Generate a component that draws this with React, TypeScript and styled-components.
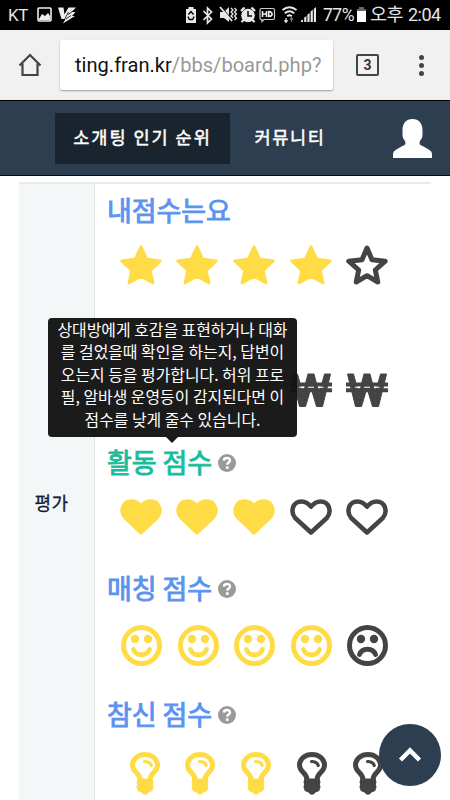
import React from 'react';
import styled, { createGlobalStyle } from 'styled-components';

const KR = '"Noto Sans CJK KR", sans-serif';

const GlobalStyle = createGlobalStyle`
  * { box-sizing: border-box; }
  html, body { margin: 0; padding: 0; }
  body { background: #fff; overflow: hidden; font-family: ${KR}; }
  svg { display: block; overflow: visible; flex: none; }
`;

const Screen = styled.div`
  position: relative;
  width: 450px;
  height: 800px;
  overflow: hidden;
  display: flex;
  flex-direction: column;
`;

const StatusBar = styled.header`
  height: 30px;
  flex: none;
  background: #000;
  color: #e6e6e6;
  display: flex;
  align-items: center;
  justify-content: space-between;
  padding: 0 9px 0 8px;
  font-family: Roboto, ${KR};
  font-size: 18px;
  line-height: 30px;
  white-space: nowrap;
`;

const StatusGroup = styled.div<{ $gap: number }>`
  display: flex;
  align-items: center;
  gap: ${(p) => p.$gap}px;
`;

const StatusText = styled.span<{ $w: number; $size?: number }>`
  width: ${(p) => p.$w}px;
  font-size: ${(p) => p.$size ?? 18}px;
  letter-spacing: -0.5px;
`;

const Toolbar = styled.div`
  height: 70px;
  flex: none;
  background: #f1f1f1;
  display: flex;
  align-items: center;
  padding-left: 18px;
`;

const AddressBar = styled.div`
  width: 273px;
  height: 50px;
  margin-left: 18px;
  padding-left: 15px;
  border-radius: 2px;
  background: #fff;
  box-shadow: 0 1px 2px rgba(0, 0, 0, 0.35);
  font: 20.1px/50px Roboto, sans-serif;
  color: #999;
  white-space: nowrap;
`;

const Host = styled.span`
  color: #111;
`;

const TabCount = styled.div`
  width: 23px;
  height: 22px;
  margin-left: 23px;
  border: 2px solid #444;
  border-radius: 2px;
  font: bold 14px/18px Roboto, sans-serif;
  color: #333;
  text-align: center;
`;

const MenuDots = styled.div`
  margin-left: 40px;
  display: flex;
  flex-direction: column;
  gap: 3px;
`;

const Dot = styled.i`
  width: 5px;
  height: 5px;
  border-radius: 50%;
  background: #444;
`;

const SiteNav = styled.nav`
  height: 76px;
  flex: none;
  background: #2c3e50;
  border-top: 1px solid #000;
  border-bottom: 1px solid #08083a;
  display: flex;
  align-items: center;
  padding-left: 55px;
`;

const NavItem = styled.a<{ $active?: boolean; $w: number }>`
  width: ${(p) => p.$w}px;
  height: 51px;
  background: ${(p) => (p.$active ? '#1a242f' : 'transparent')};
  color: #fff;
  font-size: 17.5px;
  -webkit-text-stroke: 0.5px #fff;
  letter-spacing: ${(p) => (p.$active ? 2 : 1.6)}px;
  line-height: 48px;
  text-align: center;
  white-space: nowrap;
`;

const UserIcon = styled.svg`
  margin-left: 43px;
`;

const Table = styled.main`
  width: 412px;
  height: 618px;
  flex: none;
  margin: 6px 0 0 19px;
  border-top: 2px solid #e8eaea;
  display: flex;
`;

const RowLabel = styled.div`
  width: 76px;
  background: #f3f7f8;
  border-right: 1px solid #e0e0e0;
  color: #131a38;
  font-size: 18px;
  -webkit-text-stroke: 0.3px #131a38;
  line-height: 26px;
  letter-spacing: 0.5px;
  padding: 305px 10px 0 0;
  text-align: center;
`;

const Scores = styled.div`
  width: 336px;
  padding-left: 12px;
`;

const Category = styled.section`
  height: 126px;
`;

const Heading = styled.h2<{ $active?: boolean }>`
  margin: 0;
  height: 51px;
  display: flex;
  align-items: center;
  gap: 6.500px;
  color: ${(p) => (p.$active ? '#18bc9c' : '#5b93ee')};
  font-size: 27px;
  font-weight: 400;
  -webkit-text-stroke: 0.9px currentColor;
  line-height: 50px;
  letter-spacing: -0.1px;
  white-space: nowrap;
`;

const Help = styled.svg`
  margin-top: 3px;
`;

const Marks = styled.div<{ $left: number; $gap: number; $top: number }>`
  display: flex;
  padding: ${(p) => p.$top}px 0 0 ${(p) => p.$left}px;
  gap: ${(p) => p.$gap}px;
`;

const Tooltip = styled.div`
  position: absolute;
  left: 48px;
  top: 318px;
  width: 249px;
  height: 119px;
  padding-top: 1px;
  border-radius: 4px;
  background: rgba(20, 20, 20, 0.97);
  color: #fff;
  font-size: 15.9px;
  line-height: 22.4px;
  text-align: center;
  white-space: nowrap;

  &::after {
    content: '';
    position: absolute;
    left: 118px;
    top: 119px;
    border: 6px solid transparent;
    border-top-color: #181818;
    border-bottom: 0;
  }
`;

const TooltipLine = styled.div``;

const TopButton = styled.button`
  position: absolute;
  left: 379px;
  top: 724px;
  width: 62px;
  height: 62px;
  padding: 0;
  border: 0;
  border-radius: 50%;
  background: #2c3e50;
  display: grid;
  place-items: center;
`;

type Kind = 'star' | 'won' | 'heart' | 'face' | 'bulb';

const STAR = 'M21 1.5 26.8 14 40.5 15.9 30.4 25.5 33.2 38 21 31.6 8.8 38 11.6 25.5 1.5 15.9 15.2 14Z';
const HEART = 'M21 34.500 4.700 19C-1 13 1.500 1.500 11.500 1.500c4.500 0 7.200 2 9.500 4.500 2.300-2.500 5-4.500 9.500-4.500C40.500 1.500 43 13 37.300 19Z';

const Mark = ({ kind, on }: { kind: Kind; on: boolean }) => {
  const c = on ? '#ffdc45' : '#444';
  switch (kind) {
    case 'star':
      return (
        <svg width="42" height="40" viewBox="0 0 42 40">
          {on ? (
            <path d={STAR} fill={c} stroke={c} strokeWidth="2.6" strokeLinejoin="round" />
          ) : (
            <path d="M21 3 26 14.800 39.200 16.200 29.300 25 31.800 37 21 30.700 10.200 37 12.700 25 2.800 16.200 16 14.800Z" fill="none" stroke={c} strokeWidth="5" strokeLinejoin="round" />
          )}
        </svg>
      );
    case 'won':
      return (
        <svg width="42" height="34" viewBox="0 0 42 34">
          <path d="M1.500 1H7.500L12.800 21 18 1h6l5.200 20L34.500 1h6L32.500 33.500h-6L21 15 15.500 33.500h-6Z" fill={c} stroke={c} strokeWidth="1" strokeLinejoin="round" />
          <path d="M0 11.500h42M0 17.200h42" stroke={c} strokeWidth="4" />
          <path d="M9 14.300h5.500M18 14.300h6M28 14.300h5.500" stroke="#fff" strokeWidth="1.100" />
        </svg>
      );
    case 'heart':
      return (
        <svg width="42" height="37" viewBox="0 0 42 37">
          {on ? (
            <path d={HEART} fill={c} stroke={c} strokeWidth="2.500" strokeLinejoin="round" />
          ) : (
            <path d="M21 33.500 5.200 19C0 13 2.500 2.400 11.500 2.400c4.500 0 7 2.200 9.500 5.300 2.500-3.100 5-5.300 9.500-5.300C39.500 2.400 42 13 36.800 19Z" fill="none" stroke={c} strokeWidth="4.500" strokeLinejoin="round" />
          )}
        </svg>
      );
    case 'face':
      return (
        <svg width="41" height="41" viewBox="0 0 41 41">
          <circle cx="20.500" cy="20.500" r="18" fill="none" stroke={c} strokeWidth="5" />
          <circle cx="14" cy="14" r="4.200" fill={c} />
          <circle cx="27" cy="14" r="4.200" fill={c} />
          <path d={on ? 'M12.500 24.500c2.500 7 13.500 7 16 0' : 'M12.500 29.500c2.500-7 13.500-7 16 0'} fill="none" stroke={c} strokeWidth="4.800" strokeLinecap="round" />
        </svg>
      );
    case 'bulb':
      return (
        <svg width="30" height="43" viewBox="0 0 30 43">
          <path d="M10 27.500C10 21 2.500 20 2.500 13.200 2.500 6.500 8.500 2.500 15 2.500s12.500 4 12.500 10.700C27.500 20 20 21 20 27.500" fill="none" stroke={c} strokeWidth="5" />
          <path d="M7.500 26.500h15l1 3.500-.7 2.400.8 2.300-1.400 4.300-3.700 1.600Q15 45 11.500 40.600L7.800 39l-1.400-4.300.8-2.300-.7-2.400Z" fill={c} />
          <path d="M14.500 9.500c4 0 6 1.800 6.700 4" fill="none" stroke={c} strokeWidth="3.200" strokeLinecap="round" />
        </svg>
      );
  }
};

const HelpIcon = () => (
  <Help width="18" height="18" viewBox="0 0 18 18">
    <circle cx="9" cy="9" r="9" fill="#999" />
    <path d="M5.800 6.600C6 3.200 12 3.200 12 6.400c0 2.100-2.800 2-2.800 4.300" fill="none" stroke="#fff" strokeWidth="2.400" />
    <path d="M7.900 12.300h2.700v2.600H7.900z" fill="#fff" />
  </Help>
);

interface CategoryData {
  title: string;
  kind: Kind;
  score: number;
  top: number;
  help?: boolean;
  active?: boolean;
}

const categories: CategoryData[] = [
  { title: '내점수는요', kind: 'star', score: 4, top: 10 },
  { title: '경제력 점수', kind: 'won', score: 3, top: 12, help: true },
  { title: '활동 점수', kind: 'heart', score: 3, top: 12, help: true, active: true },
  { title: '매칭 점수', kind: 'face', score: 4, top: 12, help: true },
  { title: '참신 점수', kind: 'bulb', score: 3, top: 13, help: true },
];

const spacing: Record<Kind, { left: number; gap: number }> = {
  star: { left: 12.5, gap: 14.7 },
  won: { left: 12.5, gap: 14.7 },
  heart: { left: 12.5, gap: 14.7 },
  face: { left: 14, gap: 15.5 },
  bulb: { left: 22.5, gap: 25.9 },
};

const tooltipLines = [
  '상대방에게 호감을 표현하거나 대화',
  '를 걸었을때 확인을 하는지, 답변이',
  '오는지 등을 평가합니다. 허위 프로',
  '필, 알바생 운영등이 감지된다면 이',
  '점수를 낮게 줄수 있습니다.',
];

const SystemIcons = () => (
  <svg width="138" height="18" viewBox="186 6 138 18" fill="#e8e8e8">
    <path d="M187 9h2.500V7h5v2h2.500v14h-10z" />
    <path d="m189.500 14.500 2.500-3 2.500 3m.6 2-1.500 3h-3.200l-1.500-3" fill="none" stroke="#000" strokeWidth="1.400" />
    <path d="m204.500 11 8 8-4 4V8l4 4-8 8" fill="none" stroke="#e8e8e8" strokeWidth="1.700" />
    <path d="M221 12h4l5-5v15l-5-4h-4z" />
    <path d="m222 7 12 14" stroke="#000" strokeWidth="1.200" />
    <path d="m221 7 12 14" stroke="#e8e8e8" strokeWidth="1.800" />
    <path d="m232 8 2 2-2 2 2 2-2 2 2 2m1.500-10 2 2-2 2 2 2-2 2 2 2-2 2" fill="none" stroke="#e8e8e8" strokeWidth="1.300" />
    <circle cx="249" cy="15.500" r="6.800" />
    <path d="m242 11 3.500-3.500m7 0L256 11M244.500 20l-2 2m11-2 2 2" stroke="#e8e8e8" strokeWidth="2.300" />
    <path d="M249 11v5h4" fill="none" stroke="#000" strokeWidth="1.500" />
    <path d="M262 8.500h12q1.500 0 1.500 1.500v8q0 1.500-1.500 1.500h-9l-2 2v-2h-1q-1 0-1-1.500v-8Q261 8.500 262 8.500Z" fill="none" stroke="#ccc" strokeWidth="1.200" />
    <path d="M263.500 11v6m4-6v6m-4-3h4m2.200-2.400v4.800c4.500 0 4.500-4.800 0-4.800Z" fill="none" stroke="#eee" strokeWidth="1.600" />
    <path d="M283.500 10q7-5.500 14 0m-11.700 3.200q4.700-4 9.400 0m-7 3q2.300-2 4.600 0" fill="none" stroke="#e8e8e8" strokeWidth="2" />
    <path d="M287 18v3.500m-1.600-1.200 1.600 2 1.600-2" fill="none" stroke="#eee" strokeWidth="1.200" />
    <path d="M292.500 22v-3.500m-1.600 1.200 1.600-2 1.600 2" fill="none" stroke="#777" strokeWidth="1.200" />
    <path d="M302 22v-1.500l2-1V22zM305.200 22v-4.500l2.200-1.500v6zM308.400 22v-7.500l2.200-1.500v9zM311.600 22V11.500l2.200-1.700V22zM314.800 22V9l2.200-2v15z" />
  </svg>
);

export default function App() {
  return (
    <>
      <GlobalStyle />
      <Screen>
        <StatusBar>
          <StatusGroup $gap={8}>
            <StatusText $w={21} $size={17}>KT</StatusText>
            <svg width="39" height="16" viewBox="37 7 39 16">
              <rect x="38" y="8" width="13" height="13" rx="1" fill="none" stroke="#eee" strokeWidth="1.600" />
              <path d="m39 19 3-5 3 2 3-3 2 3v4H39z" fill="#eee" />
              <path d="M58 7.500h5.500l1 7 4-7H76l-4.500 4.500h4l-3.500 4h3L63 23.500l2.500-4.500h-4z" fill="#eee" />
              <path d="m64 20.500 4.500-8.500m-2.500 7 5-3.500m-3-1 4.500-3" stroke="#000" strokeWidth=".8" />
            </svg>
          </StatusGroup>
          <StatusGroup $gap={0}>
            <SystemIcons />
            <StatusText $w={33} $size={17.5}>77%</StatusText>
            <svg width="14" height="16" viewBox="0 0 14 16">
              <path d="M1 2h2V0h5v2h2v3H1z" fill="#666" />
              <path d="M1 4h9v11H1z" fill="#fff" />
            </svg>
            <StatusText $w={38} $size={18.5}>오후</StatusText>
            <StatusText $w={33} $size={18}>2:04</StatusText>
          </StatusGroup>
        </StatusBar>

        <Toolbar>
          <svg width="24" height="24" viewBox="0 0 24 24">
            <path d="M1.500 12.500 12 2l10.500 10.500M4.500 10.500V22h15V10.500" fill="none" stroke="#444" strokeWidth="2.200" />
          </svg>
          <AddressBar>
            <Host>ting.fran.kr</Host>/bbs/board.php?
          </AddressBar>
          <TabCount>3</TabCount>
          <MenuDots>
            <Dot />
            <Dot />
            <Dot />
          </MenuDots>
        </Toolbar>

        <SiteNav>
          <NavItem $w={175} $active>소개팅 인기 순위</NavItem>
          <NavItem $w={120}>커뮤니티</NavItem>
          <UserIcon width="39" height="39" viewBox="0 0 39 39">
            <path d="M19.500 0C26 0 29.500 4.500 29.500 11v5c0 4-3 5.500-3 8 0 2 2 2.500 4 3.500l6 3.500q2.500 1.500 2.500 4v4H0v-4q0-2.500 2.500-4l6-3.500c2-1 4-1.500 4-3.500 0-2.500-3-4-3-8v-5C9.500 4.500 13 0 19.500 0Z" fill="#fff" />
          </UserIcon>
        </SiteNav>

        <Table>
          <RowLabel>평가</RowLabel>
          <Scores>
            {categories.map((c) => (
              <Category key={c.title}>
                <Heading $active={c.active}>
                  {c.title}
                  {c.help && <HelpIcon />}
                </Heading>
                <Marks $top={c.top} $left={spacing[c.kind].left} $gap={spacing[c.kind].gap}>
                  {[0, 1, 2, 3, 4].map((i) => (
                    <Mark key={i} kind={c.kind} on={i < c.score} />
                  ))}
                </Marks>
              </Category>
            ))}
          </Scores>
        </Table>

        <Tooltip role="tooltip">
          {tooltipLines.map((line) => (
            <TooltipLine key={line}>{line}</TooltipLine>
          ))}
        </Tooltip>

        <TopButton aria-label="맨 위로">
          <svg width="24" height="16" viewBox="0 0 24 16">
            <path d="M2.500 13 12 3.500l9.500 9.500" fill="none" stroke="#fff" strokeWidth="4.500" />
          </svg>
        </TopButton>
      </Screen>
    </>
  );
}
